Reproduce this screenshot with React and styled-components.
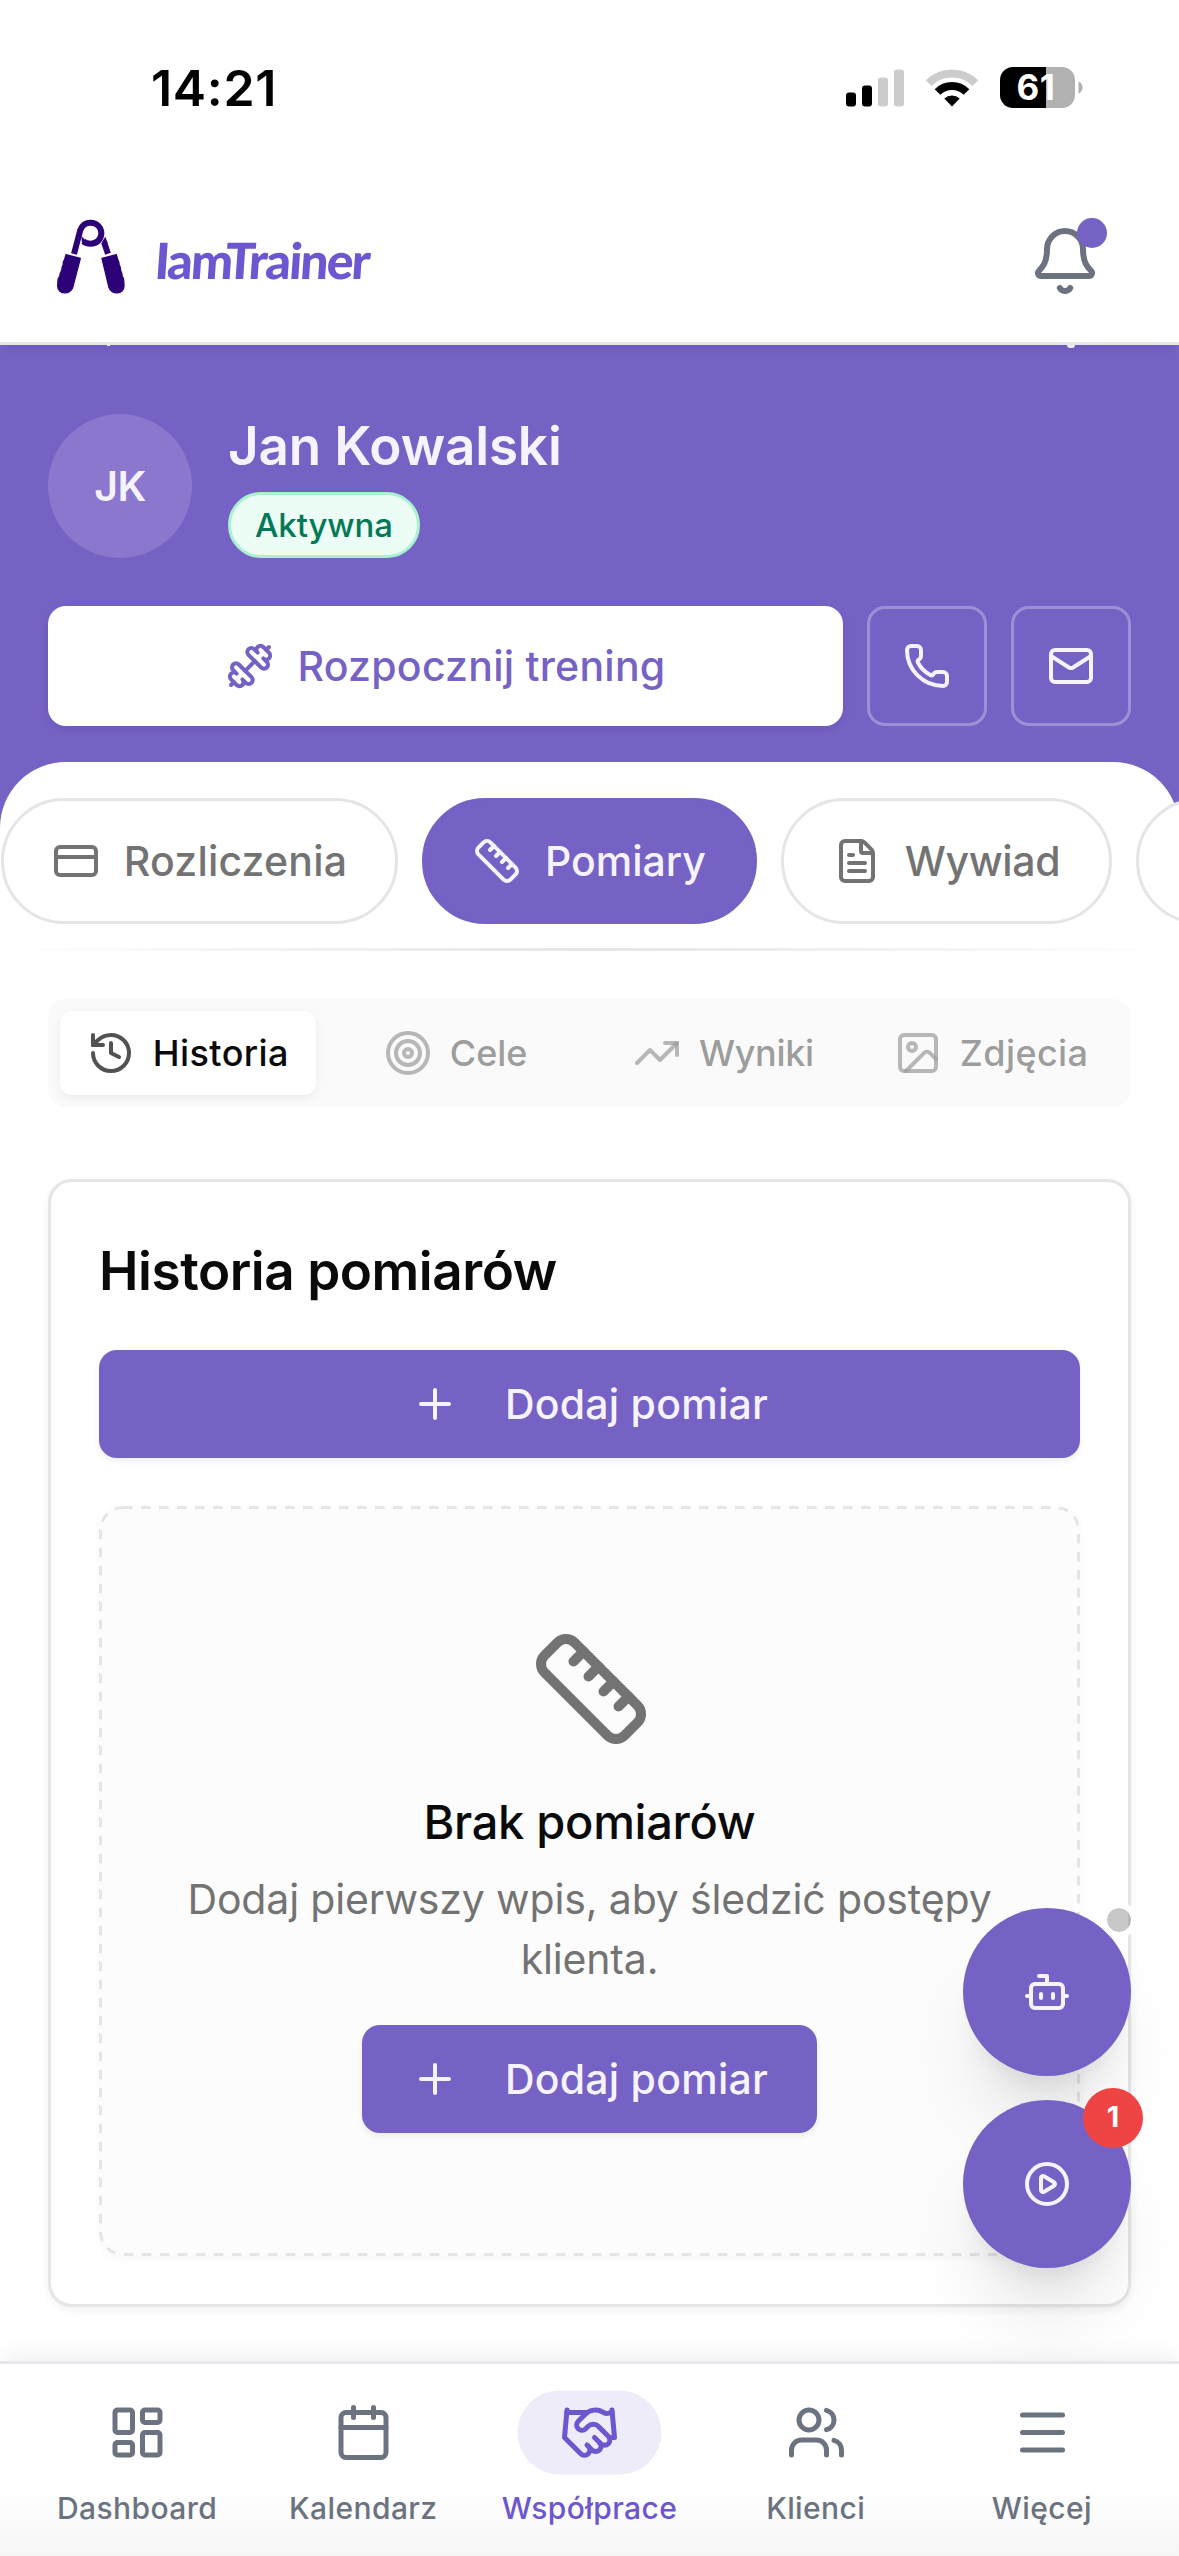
import React from 'react';
import styled, { createGlobalStyle, css } from 'styled-components';
import {
  Bell,
  Bot,
  Calendar,
  CirclePlay,
  CreditCard,
  Dumbbell,
  FileText,
  Handshake,
  History,
  Image,
  LayoutDashboard,
  Mail,
  Menu,
  Phone,
  Plus,
  Ruler,
  Target,
  TrendingUp,
  Users,
} from 'lucide-react';

const PURPLE = '#7661c5';
const VIOLET = '#6d56cf';
const LIGHT = '#f5f3ff';
const BORDER = '#e5e5e5';
const MUTED = '#737373';
const SLATE = '#6b7280';

const GlobalStyle = createGlobalStyle`
  *, *::before, *::after {
    box-sizing: border-box;
  }
  body {
    margin: 0;
    background: #fff;
    color: #0a0a0a;
    font-family: Inter, "Liberation Sans", sans-serif;
  }
  button {
    margin: 0;
    padding: 0;
    border: 0;
    background: none;
    color: inherit;
    font: inherit;
  }
  h1, h2, h3, p {
    margin: 0;
  }
  svg {
    display: block;
    flex-shrink: 0;
  }
`;

const Screen = styled.div`
  display: flex;
  flex-direction: column;
  width: 1179px;
  height: 2556px;
  overflow: hidden;
  background: #fff;
`;

/* status bar */

const StatusBar = styled.div`
  display: flex;
  align-items: center;
  flex-shrink: 0;
  height: 177px;
  padding: 0 96px 2px 151px;
`;

const Clock = styled.div`
  flex: 1;
  font-size: 50px;
  font-weight: 600;
  letter-spacing: 0.7px;
  color: #000;
`;

const StatusIcons = styled.div`
  display: flex;
  align-items: center;
  gap: 22px;
`;

const BatteryWrap = styled.div`
  display: flex;
  align-items: center;
  gap: 3px;
`;

const BatteryBody = styled.div`
  width: 75px;
  height: 41px;
  border-radius: 13px;
  background: linear-gradient(90deg, #000 61%, #b1b1b1 61%);
  color: #fff;
  font-size: 35px;
  font-weight: 700;
  line-height: 41px;
  letter-spacing: 0.6px;
  text-indent: -3px;
  text-align: center;
`;

/* app header */

const Header = styled.header`
  position: relative;
  z-index: 2;
  display: flex;
  align-items: center;
  justify-content: space-between;
  flex-shrink: 0;
  height: 168px;
  padding: 2px 78px 0 56px;
  border-bottom: 3px solid #e5e7eb;
  background: #fff;
  box-shadow: 0 9px 9px -6px rgba(0, 0, 0, 0.08);
`;

const Brand = styled.div`
  display: flex;
  align-items: center;
  gap: 29px;

  svg {
    margin-bottom: 9px;
  }
`;

const BrandName = styled.span`
  font-family: Lato, "Open Sans", sans-serif;
  font-size: 50px;
  font-weight: 900;
  letter-spacing: -1.9px;
  color: ${VIOLET};
  transform: translateY(-1px) skewX(-4deg);
`;

const BellButton = styled.button`
  position: relative;
  color: ${SLATE};
`;

const BellDot = styled.span`
  position: absolute;
  top: -7px;
  right: -6px;
  width: 30px;
  height: 30px;
  border-radius: 50%;
  background: ${PURPLE};
`;

/* client hero */

const Hero = styled.section`
  position: relative;
  flex-shrink: 0;
  padding: 69px 48px 36px;
  background: ${PURPLE};

  /* tips of the row that is scrolled under the header */
  &::before,
  &::after {
    content: "";
    position: absolute;
    z-index: 3;
    top: 0;
    background: #ececf0;
  }
  &::before {
    left: 107px;
    width: 3px;
    height: 1px;
  }
  &::after {
    left: 1067px;
    width: 8px;
    height: 3px;
    border-radius: 0 0 4px 4px;
  }
`;

const Profile = styled.div`
  display: flex;
  gap: 36px;
  margin-bottom: 48px;
`;

const Avatar = styled.div`
  display: flex;
  align-items: center;
  justify-content: center;
  width: 144px;
  height: 144px;
  border-radius: 50%;
  background: #8b78ce;
  color: ${LIGHT};
  font-size: 41px;
  font-weight: 600;
  letter-spacing: -0.6px;
`;

const ClientName = styled.h1`
  margin-bottom: 14px;
  color: ${LIGHT};
  font-size: 53px;
  font-weight: 600;
  line-height: 64px;
  letter-spacing: -0.15px;
`;

const StatusBadge = styled.span`
  display: inline-flex;
  align-items: center;
  height: 66px;
  padding: 0 24px;
  border: 3px solid #a7f3d0;
  border-radius: 33px;
  background: #ecfdf5;
  color: #047857;
  font-size: 33px;
  font-weight: 500;
  letter-spacing: -0.1px;
`;

const HeroActions = styled.div`
  display: flex;
  gap: 24px;
`;

const StartButton = styled.button`
  display: flex;
  flex: 1;
  align-items: center;
  justify-content: center;
  gap: 24px;
  height: 120px;
  border-radius: 18px;
  background: #fff;
  box-shadow: 0 3px 9px rgba(0, 0, 0, 0.08);
  color: ${PURPLE};
  font-size: 41px;
  font-weight: 500;
  letter-spacing: 0.25px;
`;

const ContactButton = styled.button`
  display: flex;
  align-items: center;
  justify-content: center;
  width: 120px;
  height: 120px;
  border: 3px solid rgba(255, 255, 255, 0.3);
  border-radius: 18px;
  color: ${LIGHT};
`;

/* main tabs */

const TabSheet = styled.div`
  flex-shrink: 0;
  background: linear-gradient(${PURPLE} 0 90px, #fff 90px);
`;

const TabRow = styled.nav`
  display: flex;
  gap: 24px;
  padding: 36px 0 24px 1px;
  border-radius: 66px 66px 0 0;
  background: #fff;
`;

const Tab = styled.button`
  display: flex;
  flex-shrink: 0;
  align-items: center;
  justify-content: center;
  gap: 24px;
  width: ${(p) => p.$width}px;
  height: 126px;
  border: 3px solid ${BORDER};
  border-radius: 63px;
  background: #fff;
  color: ${MUTED};
  font-size: 41px;
  font-weight: 500;
  letter-spacing: ${(p) => p.$spacing || 0}px;

  ${(p) =>
    p.$active &&
    css`
      border-color: ${PURPLE};
      background: ${PURPLE};
      color: ${LIGHT};
    `}
`;

const Divider = styled.div`
  height: 3px;
  background: linear-gradient(90deg, transparent, ${BORDER} 50%, transparent);
`;

/* measurements */

const Content = styled.main`
  flex: 1;
  padding: 48px 48px 0;
`;

const Segments = styled.div`
  display: grid;
  grid-template-columns: repeat(4, 1fr);
  gap: 12px;
  height: 108px;
  margin-bottom: 72px;
  padding: 12px;
  border-radius: 18px;
  background: #fafafa;
`;

const Segment = styled.button`
  display: flex;
  align-items: center;
  justify-content: center;
  gap: 18px;
  border-radius: 12px;
  color: rgba(115, 115, 115, 0.7);
  font-size: 36px;
  font-weight: 500;
  letter-spacing: ${(p) => p.$spacing || 0}px;

  svg {
    opacity: 0.7;
  }

  ${(p) =>
    p.$active &&
    css`
      background: #fff;
      box-shadow: 0 3px 9px rgba(0, 0, 0, 0.06);
      color: #0a0a0a;
    `}
`;

const Card = styled.section`
  height: 1128px;
  padding: 48px;
  border: 3px solid ${BORDER};
  border-radius: 24px;
  background: #fff;
  box-shadow: 0 3px 9px rgba(0, 0, 0, 0.06);
`;

const CardTitle = styled.h2`
  margin: 0 0 38px;
  font-size: 53px;
  font-weight: 600;
  line-height: 82px;
  letter-spacing: -0.45px;
`;

const AddButton = styled.button`
  display: flex;
  align-items: center;
  justify-content: center;
  gap: 46px;
  width: ${(p) => (p.$wide ? '100%' : '455px')};
  height: 108px;
  border-radius: 18px;
  background: ${PURPLE};
  box-shadow: 0 3px 6px rgba(0, 0, 0, 0.07);
  color: ${LIGHT};
  font-size: 41px;
  font-weight: 500;
  letter-spacing: 0.25px;
`;

// long dashes, which a plain dashed border does not give
const dashedFrame = `url("data:image/svg+xml,%3Csvg xmlns='http://www.w3.org/2000/svg' width='981' height='750'%3E%3Crect x='1.5' y='1.5' width='978' height='747' rx='22.5' fill='none' stroke='%23e5e5e5' stroke-width='3' stroke-dasharray='9.5 8.5'/%3E%3C/svg%3E")`;

const EmptyState = styled.div`
  display: flex;
  flex-direction: column;
  align-items: center;
  height: 750px;
  margin-top: 48px;
  padding: 123px 69px 0;
  border-radius: 24px;
  background: #fcfcfc ${dashedFrame} no-repeat;
  box-shadow: 0 3px 9px rgba(0, 0, 0, 0.03);
  color: ${MUTED};
  text-align: center;

  > svg {
    margin-left: 3px;
  }
`;

const EmptyTitle = styled.h3`
  margin: 37px 0 11px;
  color: #0a0a0a;
  font-size: 47px;
  font-weight: 500;
  line-height: 72px;
  letter-spacing: -0.3px;
`;

const EmptyText = styled.p`
  margin-bottom: 36px;
  font-size: 41px;
  line-height: 60px;
  letter-spacing: -0.15px;
`;

/* floating buttons */

const FloatingStack = styled.div`
  position: absolute;
  z-index: 4;
  top: 1908px;
  left: 963px;
  display: flex;
  flex-direction: column;
  gap: 24px;
`;

const FloatingButton = styled.button`
  position: relative;
  display: flex;
  align-items: center;
  justify-content: center;
  width: 168px;
  height: 168px;
  border-radius: 50%;
  background: ${PURPLE};
  box-shadow: 0 60px 75px -15px rgba(0, 0, 0, 0.1), 0 24px 30px -18px rgba(0, 0, 0, 0.1);
  color: ${LIGHT};
`;

const OfflineDot = styled.span`
  position: absolute;
  top: -6px;
  right: -6px;
  width: 36px;
  height: 36px;
  border: 6px solid #fff;
  border-radius: 50%;
  background: rgba(115, 115, 115, 0.4) padding-box;
`;

const CountBadge = styled.span`
  position: absolute;
  top: -12px;
  right: -12px;
  width: 60px;
  height: 60px;
  border-radius: 50%;
  background: #ef4444;
  color: #fff;
  font-size: 29px;
  font-weight: 700;
  line-height: 57px;
  text-align: center;
`;

/* bottom navigation */

const BottomNav = styled.nav`
  position: relative;
  display: grid;
  grid-template-columns: repeat(5, 1fr);
  flex-shrink: 0;
  height: 195px;
  padding: 26px 24px 0;
  border-top: 3px solid #e5e7eb;
  background: linear-gradient(#fff 65%, #f6f6f6);
  box-shadow: 0 -12px 18px -3px rgba(0, 0, 0, 0.05);
`;

const NavItem = styled.a`
  display: flex;
  flex-direction: column;
  align-items: center;
  gap: 16px;
  color: ${(p) => (p.$active ? VIOLET : SLATE)};
  font-size: 30px;
  font-weight: 500;
  line-height: 36px;
  letter-spacing: 0.4px;
`;

const NavIcon = styled.span`
  display: flex;
  align-items: center;
  justify-content: center;
  width: 144px;
  height: 84px;
  border-radius: 42px;
  background: ${(p) => (p.$active ? '#efecf9' : 'transparent')};
  transform: translate(0.5px, 0.5px);
`;

function SignalIcon() {
  return (
    <svg width="58" height="38" viewBox="0 0 58 38">
      <rect x="0" y="23.5" width="10" height="14" rx="3" />
      <rect x="16" y="16.5" width="10" height="21" rx="3" />
      <rect x="32" y="8.5" width="10" height="29" rx="3" fill="#ccc" />
      <rect x="48" y="0.5" width="10" height="37" rx="3" fill="#ccc" />
    </svg>
  );
}

function WifiIcon() {
  return (
    <svg width="52" height="38" viewBox="0 0 52 38" fill="none" strokeWidth="8">
      <path d="M2.7 14.2A33 33 0 0 1 49.3 14.2" stroke="#ccc" />
      <path d="M11.5 23A20.5 20.5 0 0 1 40.5 23" stroke="#000" />
      <path d="M26 37.5L18.3 29.4A12 12 0 0 1 33.7 29.4Z" fill="#000" />
    </svg>
  );
}

function Battery() {
  return (
    <BatteryWrap>
      <BatteryBody>61</BatteryBody>
      <svg width="5" height="13" viewBox="0 0 5 13">
        <path d="M0.5 0.5C6 2.5 6 10.5 0.5 12.5Z" fill="#b1b1b1" />
      </svg>
    </BatteryWrap>
  );
}

// hand gripper: spring coil on top, two ribbed handles
function GripperLogo() {
  return (
    <svg width="70" height="77" viewBox="48 52 210 231">
      <g fill="none" stroke="#2c0077" strokeWidth="18">
        <path d="M102 160L121 88C127 72 138 66 152 66C170 66 184 80 184 98C184 116 170 129 152 129C143 129 136 127 130 122" />
        <path d="M192 124L204 159" />
      </g>
      <path d="M124 106L138 120L132 132L126 126Z" fill="#2c0077" />
      <path d="M196 108L203 127L188 133L186 124Z" fill="#2c0077" />
      <g fill="#2c0077" stroke="#2c0077" strokeWidth="4" strokeLinejoin="round">
        <path d="M78 162L121 173L98 261C91 283 53 282 53 256L54 238C54 232 60 229 60 224C59 216 66 212 66 205C65 198 70 195 70 190C68 184 73 180 74 176Z" />
        <path d="M229 162L186 173L207 261C214 283 252 282 252 256L251 238C251 232 246 229 246 224C247 216 241 212 241 205C242 198 237 195 237 190C238 184 234 180 233 176Z" />
      </g>
    </svg>
  );
}

const tabs = [
  { label: 'Rozliczenia', icon: CreditCard, width: 397, spacing: 0.2 },
  { label: 'Pomiary', icon: Ruler, width: 335, active: true },
  { label: 'Wywiad', icon: FileText, width: 331, spacing: -0.4 },
  { label: '', width: 335 },
];

const segments = [
  { label: 'Historia', icon: History, active: true, spacing: 0.4 },
  { label: 'Cele', icon: Target },
  { label: 'Wyniki', icon: TrendingUp, spacing: -0.3 },
  { label: 'Zdjęcia', icon: Image, spacing: 0.4 },
];

const navItems = [
  { label: 'Dashboard', icon: LayoutDashboard },
  { label: 'Kalendarz', icon: Calendar },
  { label: 'Współprace', icon: Handshake, active: true },
  { label: 'Klienci', icon: Users },
  { label: 'Więcej', icon: Menu },
];

export default function App() {
  return (
    <>
      <GlobalStyle />
      <Screen>
        <StatusBar>
          <Clock>14:21</Clock>
          <StatusIcons>
            <SignalIcon />
            <WifiIcon />
            <Battery />
          </StatusIcons>
        </StatusBar>

        <Header>
          <Brand>
            <GripperLogo />
            <BrandName>IamTrainer</BrandName>
          </Brand>
          <BellButton>
            <Bell size={72} />
            <BellDot />
          </BellButton>
        </Header>

        <Hero>
          <Profile>
            <Avatar>JK</Avatar>
            <div>
              <ClientName>Jan Kowalski</ClientName>
              <StatusBadge>Aktywna</StatusBadge>
            </div>
          </Profile>
          <HeroActions>
            <StartButton>
              <Dumbbell size={48} />
              Rozpocznij trening
            </StartButton>
            <ContactButton>
              <Phone size={48} />
            </ContactButton>
            <ContactButton>
              <Mail size={48} />
            </ContactButton>
          </HeroActions>
        </Hero>

        <TabSheet>
          <TabRow>
            {tabs.map(({ label, icon: Icon, width, active, spacing }) => (
              <Tab key={label} $width={width} $active={active} $spacing={spacing}>
                {Icon && <Icon size={48} />}
                {label}
              </Tab>
            ))}
          </TabRow>
          <Divider />
        </TabSheet>

        <Content>
          <Segments>
            {segments.map(({ label, icon: Icon, active, spacing }) => (
              <Segment key={label} $active={active} $spacing={spacing}>
                <Icon size={48} />
                {label}
              </Segment>
            ))}
          </Segments>

          <Card>
            <CardTitle>Historia pomiarów</CardTitle>
            <AddButton $wide>
              <Plus size={48} />
              Dodaj pomiar
            </AddButton>
            <EmptyState>
              <Ruler size={120} />
              <EmptyTitle>Brak pomiarów</EmptyTitle>
              <EmptyText>Dodaj pierwszy wpis, aby śledzić postępy klienta.</EmptyText>
              <AddButton>
                <Plus size={48} />
                Dodaj pomiar
              </AddButton>
            </EmptyState>
          </Card>
        </Content>

        <BottomNav>
          {navItems.map(({ label, icon: Icon, active }) => (
            <NavItem key={label} $active={active}>
              <NavIcon $active={active}>
                <Icon size={60} />
              </NavIcon>
              {label}
            </NavItem>
          ))}
        </BottomNav>

        <FloatingStack>
          <FloatingButton>
            <Bot size={48} />
            <OfflineDot />
          </FloatingButton>
          <FloatingButton>
            <CirclePlay size={48} />
            <CountBadge>1</CountBadge>
          </FloatingButton>
        </FloatingStack>
      </Screen>
    </>
  );
}
